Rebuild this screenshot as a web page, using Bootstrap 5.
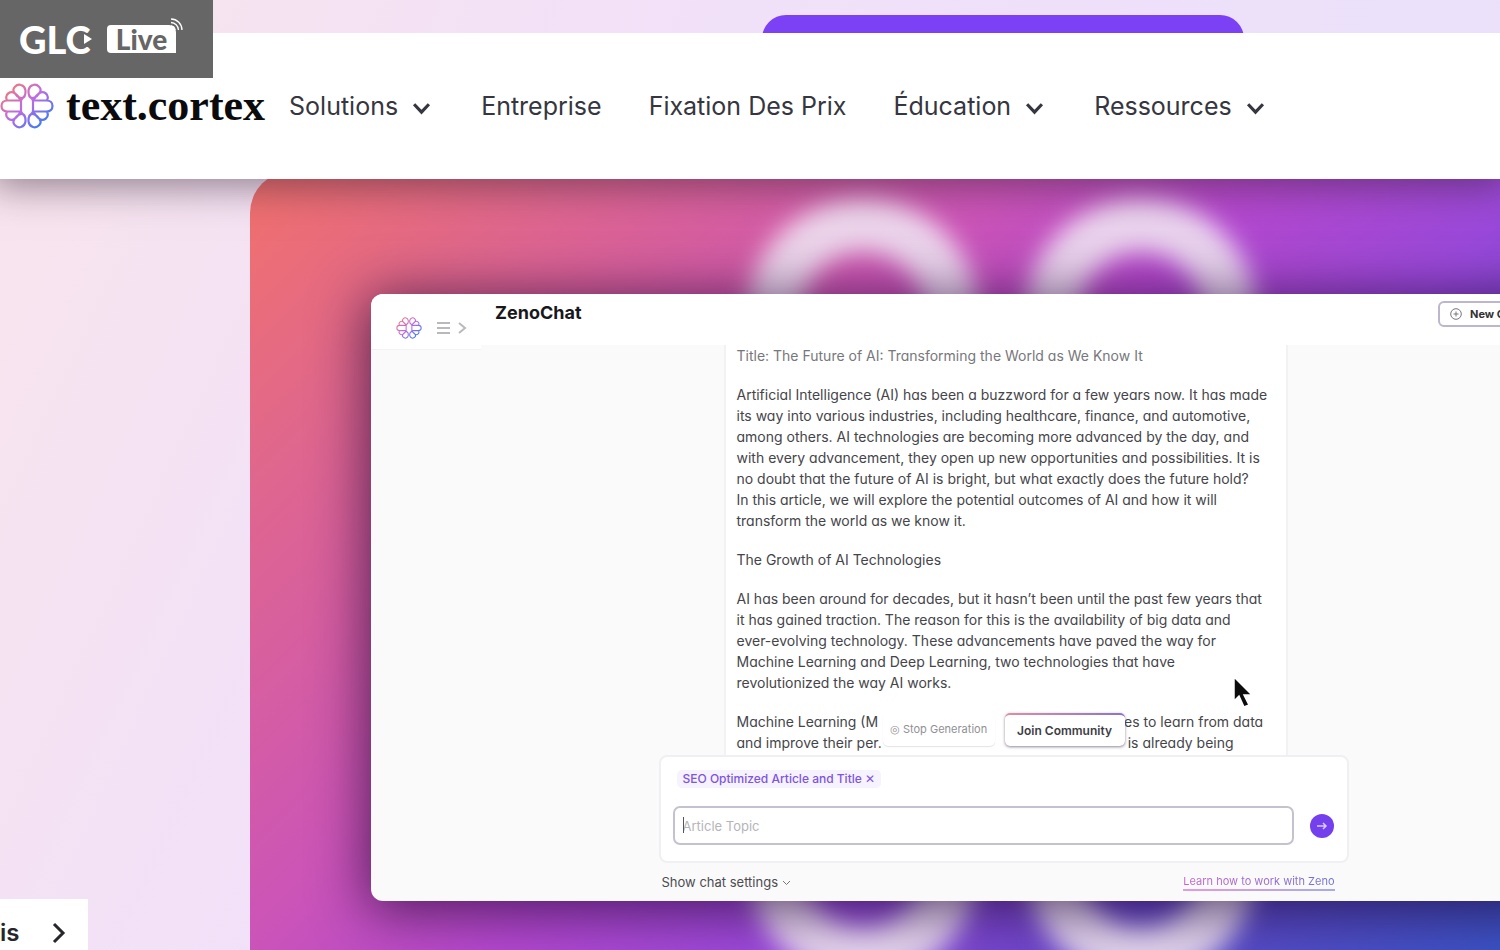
<!DOCTYPE html>
<html lang="fr">
<head>
<meta charset="utf-8">
<meta name="viewport" content="width=device-width, initial-scale=1">
<title>text.cortex</title>
<link href="https://cdn.jsdelivr.net/npm/bootstrap@5.3.0/dist/css/bootstrap.min.css" rel="stylesheet">
<style>
body{font-family:Inter,"Liberation Sans",sans-serif;background:linear-gradient(115deg,#f9e5ec 0,#f2e1f7 30%,#efe0fa 55%,#e6e2f9 100%);color:#333}
.page{height:100vh;min-height:640px}
.strip{height:33px}
.cta{width:482px;height:60px;margin-top:15px;margin-left:762px;border-radius:24px;background:#7c40f5;border:0}
.live{width:213px;height:78px;background:#666;color:#fff;z-index:5;padding-left:19px;gap:10px}
.live-name{font:900 38px/40px Lato,sans-serif;width:78px;gap:2px}
.live-tag{font:900 28px/29px Lato,sans-serif;color:#666;background:#fff;border-radius:4px 7px 0 4px;width:69px;height:28px}
.play{left:64px;top:14px}
.waves{right:-8px;top:-8px}
.topnav{height:146px;background:#fff;z-index:3;box-shadow:0 0 36px 8px rgba(50,30,50,.5);clip-path:inset(0 0 -70px 0)}
.wordmark{font:700 44px/46px "Liberation Serif",serif;color:#0b0b0d}
.menu{gap:47px;margin-left:24px}
.menu a,.menu button{font-size:25px;line-height:32px;color:#363640;white-space:nowrap}
.menu svg{margin:0 3px 0 14px}
.side{width:250px}
.chip{width:88px;height:51px;background:#fff;font-size:24px;line-height:30px;font-weight:600;color:#26262c}
.hero{background:linear-gradient(135deg,#f2716c 0,#e0678c 15%,#cb54b8 38%,#b548ce 50%,#9a49da 64%,#6646c8 80%,#3b53c4 100%);border-top-left-radius:42px;margin-top:-8px;padding:123px 0 49px 121px}
.rings{left:470px;top:8px;width:560px;height:800px}
.app{background:#fafafa;border-radius:12px;margin-right:-136px;box-shadow:0 6px 54px 4px rgba(25,5,45,.68)}
.apphead{height:51px;background:#fff;border-radius:12px 12px 0 0;padding:7px 68px 0 124px;flex-shrink:0}
.apphead h1{font-size:18px;line-height:24px;font-weight:700;color:#18181c}
.tools{left:0;top:13px;width:110px;height:43px;background:#fff;padding-left:25px;gap:14px;border-bottom:1px solid #f3f3f3}
.newchat{width:130px;height:26px;border:2px solid #bcb7cc;border-radius:6px;background:#fff;font-size:11px;line-height:14px;font-weight:700;color:#333;padding:0 0 0 10px}
.article{width:564px;background:#fff;border:solid #f2f2f3;border-width:0 2px;padding:0 10px 0 11px;font-size:14px;line-height:21px;color:#45454a;font-feature-settings:"cv11";white-space:nowrap}
.article p{margin-bottom:18px}
.article .title{color:#77777c}
.behind{display:inline-block;width:246px}
.chatcol{width:690px;max-width:100%}
.composer{background:#fff;border:2px solid #f0eff2;border-radius:8px;height:108px;padding:13px 13px 0 12px}
.tag{font-size:12px;line-height:18px;font-weight:500;background:#f6f2fe;color:#7d55e0;border-radius:5px;padding:0 6px;border:0}
.entry{margin-top:18px}
.topic{height:39px;border:2px solid #c4c2cf;border-radius:7px;font-size:13px;line-height:18px;padding:0 8px;color:#444}
.topic::placeholder{color:#b5b5b9}
.caret{left:10px;top:11px;width:1px;height:16px;background:#555}
.send{width:24px;height:24px;background:#7440ee;border:0}
.pills{top:-42px;left:224px;gap:10px}
.pills button{height:33px;background:#fff;border:0;border-radius:5px;padding:0;white-space:nowrap}
.stop{width:112px;font-size:11px;color:#909095;box-shadow:0 1px 1px rgba(60,60,80,.14)}
.pills .join{width:120px;font-size:12px;font-weight:600;color:#3d3d44;box-shadow:0 1px 3px rgba(60,60,80,.6);background:linear-gradient(#fff,#fff) padding-box,linear-gradient(90deg,#dd8fa5,#8d72cf) border-box;border:0 solid transparent;border-top-width:2px}
.below{height:38px;padding:0 14px 0 3px;font-size:13px;line-height:18px}
.below button{color:#4c4c52;font-size:13px;line-height:18px}
.learn{font-size:11px;line-height:15px;background:linear-gradient(90deg,#c565c9,#6f70d5);-webkit-background-clip:text;background-clip:text;color:transparent;text-decoration:none}
.learnline{border-bottom:2px solid;border-image:linear-gradient(90deg,#e29be0,#a7abe9) 1}
.pointer{left:1232px;top:676px;z-index:6}
.minh0{min-height:0}
</style>
</head>
<body>
<svg width="0" height="0" class="position-absolute" aria-hidden="true">
<defs>
<linearGradient id="hue" x1="0" y1="0" x2="1" y2="1"><stop offset=".1" stop-color="#f27a78"/><stop offset=".5" stop-color="#b86be6"/><stop offset=".9" stop-color="#2d7df5"/></linearGradient>
<g id="quarter"><path d="M21 23V17.500H7.500C3.500 17.500 1.500 20 1.500 23M7 17.500C4 11 11 7 15 10.500C18 12.500 19 15 21 17.500M14.500 10C11 5 17 .8 21 2C26.500 3.500 26 10 24.500 13.500C22 17 17 14 14.500 10M24.500 13C23 15 21 16 21 18"/></g>
<mask id="petals"><g fill="none" stroke="#fff" stroke-width="2.200"><use href="#quarter"/><use href="#quarter" transform="matrix(1 0 0 -1 0 46)"/><use href="#quarter" transform="matrix(-1 0 0 1 54 0)"/><use href="#quarter" transform="matrix(-1 0 0 -1 54 46)"/></g></mask>
<symbol id="flower" viewBox="0 0 54 46"><rect width="54" height="46" fill="url(#hue)" mask="url(#petals)"/></symbol>
<symbol id="down" viewBox="0 0 18 12"><path d="M2 2l7 7.500L16 2" fill="none" stroke="currentColor" stroke-width="3"/></symbol>
</defs></svg>
<div class="page d-flex flex-column position-relative overflow-hidden">
  <div class="live position-absolute top-0 start-0 d-flex align-items-center">
    <div class="live-name position-relative">GLC<svg class="play position-absolute" width="12" height="12" viewBox="0 0 12 12"><path d="M1 1l8 5-8 5z" fill="#fff"/></svg></div>
    <div class="live-tag position-relative text-center">Live<svg class="waves position-absolute" width="15" height="15" viewBox="0 0 15 15" fill="none" stroke="#fff" stroke-width="1.300"><path d="M2 2A11 11 0 0 1 13 13M2 5.500A8 8 0 0 1 9.500 13M2 9A4.500 4.500 0 0 1 6 13"/></svg></div>
  </div>
  <div class="strip overflow-hidden flex-shrink-0"><button class="cta d-block" aria-label="Commencer"></button></div>
  <header class="topnav d-flex align-items-center position-relative flex-shrink-0">
    <a href="#" class="d-flex align-items-center text-decoration-none"><svg width="54" height="46"><use href="#flower"/></svg><span class="wordmark ms-2 ps-1">text.cortex</span></a>
    <nav class="menu d-flex align-items-center">
      <button class="btn p-0 border-0">Solutions<svg width="19" height="13"><use href="#down"/></svg></button>
      <a href="#" class="text-decoration-none">Entreprise</a>
      <a href="#" class="text-decoration-none">Fixation Des Prix</a>
      <button class="btn p-0 border-0">Éducation<svg width="19" height="13"><use href="#down"/></svg></button>
      <button class="btn p-0 border-0">Ressources<svg width="19" height="13"><use href="#down"/></svg></button>
    </nav>
  </header>
  <main class="d-flex flex-grow-1 minh0">
    <div class="side d-flex align-items-end flex-shrink-0"><button class="chip border-0 p-0 pt-3 d-flex align-items-center gap-4">is<svg class="ms-2" width="16" height="22" viewBox="0 0 16 22" fill="none" stroke="#26262c" stroke-width="3"><path d="M3 2l9 9-9 9"/></svg></button></div>
    <section class="hero flex-grow-1 d-flex position-relative overflow-hidden">
      <svg class="rings position-absolute" viewBox="0 0 560 800" aria-hidden="true"><defs><filter id="soft" x="-20%" y="-20%" width="140%" height="140%"><feGaussianBlur stdDeviation="12"/></filter></defs><g fill="none" stroke="#f0e2f2" stroke-width="54" stroke-opacity=".9" filter="url(#soft)"><rect x="55" y="46" width="176" height="728" rx="88"/><rect x="333" y="46" width="176" height="728" rx="88"/></g></svg>
      <div class="app flex-grow-1 d-flex flex-column position-relative">
        <div class="apphead d-flex justify-content-between align-items-start">
          <h1 class="m-0">ZenoChat</h1>
          <button class="newchat d-flex align-items-center gap-2"><svg width="12" height="12" viewBox="0 0 12 12" fill="none" stroke="#77777d"><circle cx="6" cy="6" r="5.300"/><path d="M6 3.500v5M3.500 6h5"/></svg>New Chat</button>
        </div>
        <div class="tools position-absolute d-flex align-items-center"><svg width="26" height="22"><use href="#flower"/></svg><svg width="32" height="14" viewBox="0 0 32 14" fill="none" stroke="#b9b9bd" stroke-width="2"><path d="M1 2h13M1 7h13M1 12h13M23 2l6 5-6 5"/></svg></div>
        <div class="d-flex justify-content-center flex-grow-1 overflow-hidden minh0">
          <article class="article ms-1">
            <p class="title">Title: The Future of AI: Transforming the World as We Know It</p>
            <p>Artificial Intelligence (AI) has been a buzzword for a few years now. It has made<br>its way into various industries, including healthcare, finance, and automotive,<br>among others. AI technologies are becoming more advanced by the day, and<br>with every advancement, they open up new opportunities and possibilities. It is<br>no doubt that the future of AI is bright, but what exactly does the future hold?<br>In this article, we will explore the potential outcomes of AI and how it will<br>transform the world as we know it.</p>
            <p>The Growth of AI Technologies</p>
            <p>AI has been around for decades, but it hasn’t been until the past few years that<br>it has gained traction. The reason for this is the availability of big data and<br>ever-evolving technology. These advancements have paved the way for<br>Machine Learning and Deep Learning, two technologies that have<br>revolutionized the way AI works.</p>
            <p>Machine Learning (M<span class="behind"></span>es to learn from data<br>and improve their per.<span class="behind"></span>is already being</p>
          </article>
        </div>
        <div class="chatcol mx-auto position-relative flex-shrink-0">
          <div class="pills position-absolute d-flex"><button class="stop">◎ Stop Generation</button><button class="join">Join Community</button></div>
          <div class="composer">
            <button class="tag ms-1 d-block">SEO Optimized Article and Title ✕</button>
            <div class="entry d-flex align-items-center gap-3">
              <div class="position-relative flex-grow-1"><input class="topic form-control" type="text" placeholder="Article Topic" aria-label="Article Topic"><span class="caret position-absolute"></span></div>
              <button class="send rounded-circle p-0 d-flex align-items-center justify-content-center" aria-label="Send"><svg width="12" height="10" viewBox="0 0 12 10" fill="none" stroke="#d9c8ff" stroke-width="1.500"><path d="M1 5h9M7 2l3 3-3 3"/></svg></button>
            </div>
          </div>
          <div class="below d-flex justify-content-between align-items-center"><button class="btn p-0 border-0">Show chat settings <svg width="9" height="6" viewBox="0 0 9 6" fill="none" stroke="#77777c"><path d="M1 1l3.500 3.500L8 1"/></svg></button><span class="learnline"><a href="#" class="learn d-block">Learn how to work with Zeno</a></span></div>
        </div>
      </div>
    </section>
  </main>
  <svg class="pointer position-absolute" width="22" height="34" viewBox="0 0 22 34" aria-hidden="true"><path d="M2 1v24l5-5 5 11 5-2-5-10h8z" fill="#0c0c0c" stroke="#fff" stroke-width="1.500"/></svg>
</div>
<script src="https://cdn.jsdelivr.net/npm/bootstrap@5.3.0/dist/js/bootstrap.bundle.min.js"></script>
</body>
</html>
